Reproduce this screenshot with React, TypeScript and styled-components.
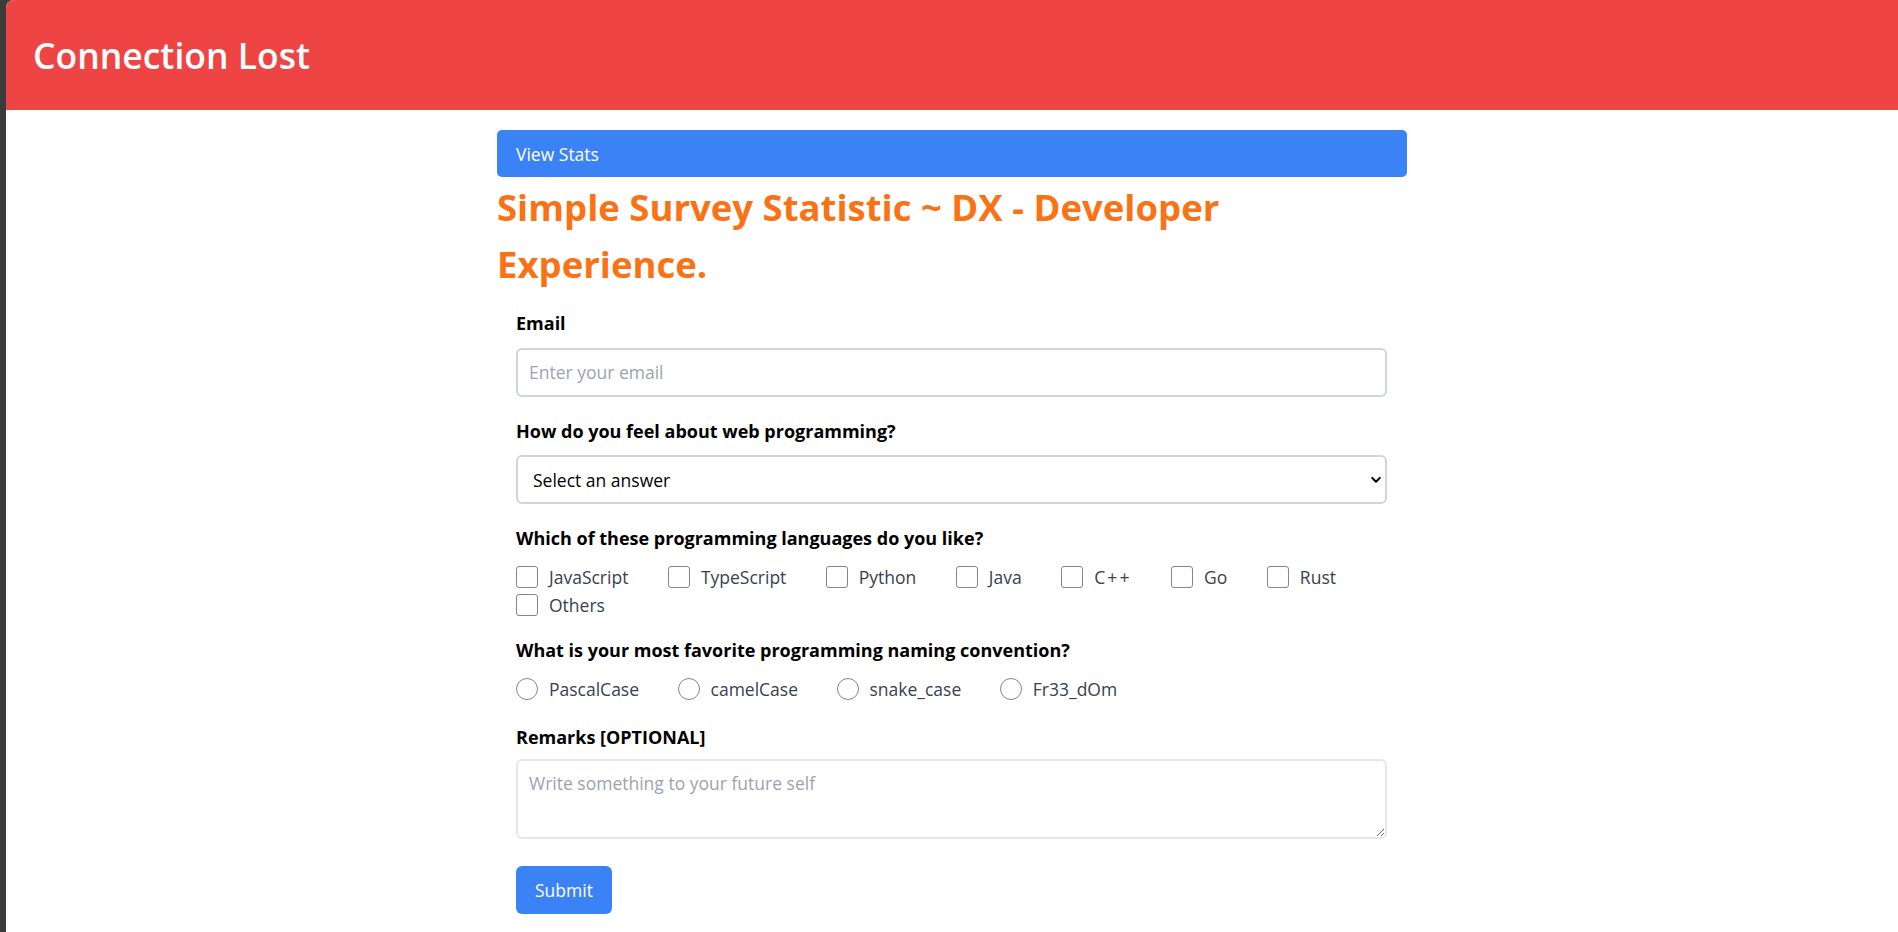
import React from "react";
import styled, { createGlobalStyle } from "styled-components";

const GlobalStyle = createGlobalStyle`
  * { box-sizing: border-box; }
  html, body { margin: 0; padding: 0; }
  body {
    background: #3b3b3b;
    font-family: "Open Sans", "Noto Sans", Arial, sans-serif;
  }
`;

const Shell = styled.div`
  margin-left: 6px;
  min-height: 100vh;
  background: #ffffff;
  border-top-left-radius: 8px;
  overflow: hidden;
`;

const Header = styled.header`
  height: 110px;
  background: #ef4444;
  display: flex;
  align-items: center;
  padding-left: 27px;
`;

const HeaderTitle = styled.h1`
  margin: 0;
  color: #ffffff;
  font-size: 35.5px;
  font-weight: 600;
  line-height: 1;
  padding-top: 2px;
`;

const Main = styled.main`
  max-width: 910px;
  margin: 0 auto;
  padding-top: 20px;
  padding-bottom: 20px;
`;

const StatsButton = styled.button`
  display: block;
  width: 100%;
  height: 47px;
  padding: 0 19px;
  border: none;
  border-radius: 5px;
  background: #3b82f6;
  color: #ffffff;
  font-family: inherit;
  font-size: 17.5px;
  text-align: left;
  cursor: pointer;
`;

const Title = styled.h2`
  margin: 2px 0 0;
  color: #f97316;
  font-size: 36.5px;
  font-weight: 700;
  line-height: 57px;
`;

const Form = styled.form`
  padding: 16px 20px 0 19px;
  display: flex;
  flex-direction: column;
`;

const Field = styled.div<{ $gap?: number }>`
  display: flex;
  flex-direction: column;
  margin-bottom: ${(p) => p.$gap ?? 20}px;
`;

const Label = styled.label<{ $space?: number }>`
  font-size: 18px;
  font-weight: 700;
  line-height: 28px;
  color: #000000;
  margin-bottom: ${(p) => p.$space ?? 10.5}px;
`;

const TextInput = styled.input`
  height: 49px;
  width: 100%;
  padding: 0 11px;
  border: 2px solid #d1d5db;
  border-radius: 6px;
  font-family: inherit;
  font-size: 17.5px;
  color: #111827;
  outline: none;
  &::placeholder { color: #9ca3af; }
`;

const SelectWrap = styled.div`
  position: relative;
  width: 100%;
`;

const Select = styled.select`
  appearance: none;
  width: 100%;
  height: 49px;
  padding: 0 15px;
  border: 2px solid #d1d5db;
  border-radius: 6px;
  background: #ffffff;
  font-family: inherit;
  font-size: 17.5px;
  color: #000000;
  outline: none;
`;

const Chevron = styled.svg`
  position: absolute;
  right: 6px;
  top: 50%;
  width: 10px;
  height: 7px;
  transform: translateY(-50%);
  pointer-events: none;
`;

const OptionGroup = styled.div<{ $gap: number }>`
  display: flex;
  flex-wrap: wrap;
  column-gap: ${(p) => p.$gap}px;
`;

const OptionItem = styled.label`
  display: flex;
  align-items: center;
  height: 28px;
  font-size: 17.5px;
  line-height: 28px;
  color: #374151;
  cursor: pointer;
`;

const OptionText = styled.span<{ $spaced?: boolean }>`
  letter-spacing: ${(p) => (p.$spaced ? "0.12em" : "normal")};
`;

const Control = styled.input<{ $round?: boolean }>`
  appearance: none;
  width: 22px;
  height: 22px;
  margin: 0 11px 0 0;
  border: 1.5px solid #858585;
  border-radius: ${(p) => (p.$round ? "50%" : "3px")};
  background: #ffffff;
  flex-shrink: 0;
`;

const TextArea = styled.textarea`
  display: block;
  width: 100%;
  height: 80px;
  padding: 10px 11px;
  border: 2px solid #e5e7eb;
  border-radius: 6px;
  font-family: inherit;
  font-size: 17.5px;
  color: #111827;
  resize: vertical;
  outline: none;
  &::placeholder { color: #9ca3af; }
`;

const SubmitButton = styled.button`
  align-self: flex-start;
  margin-top: 6.5px;
  height: 48px;
  padding: 0 19px;
  border: none;
  border-radius: 6px;
  background: #3b82f6;
  color: #ffffff;
  font-family: inherit;
  font-size: 17.5px;
  cursor: pointer;
`;

const languages = ["JavaScript", "TypeScript", "Python", "Java", "C++", "Go", "Rust", "Others"];
const conventions = ["PascalCase", "camelCase", "snake_case", "Fr33_dOm"];

export default function App() {
  return (
    <>
      <GlobalStyle />
      <Shell>
        <Header>
          <HeaderTitle>Connection Lost</HeaderTitle>
        </Header>
        <Main>
          <StatsButton type="button">View Stats</StatsButton>
          <Title>Simple Survey Statistic ~ DX - Developer Experience.</Title>
          <Form onSubmit={(e) => e.preventDefault()}>
            <Field>
              <Label htmlFor="email">Email</Label>
              <TextInput id="email" type="email" placeholder="Enter your email" />
            </Field>
            <Field>
              <Label htmlFor="feel">How do you feel about web programming?</Label>
              <SelectWrap>
                <Select id="feel" defaultValue="">
                  <option value="">Select an answer</option>
                  <option value="love">I love it</option>
                  <option value="ok">It's okay</option>
                  <option value="hate">I hate it</option>
                </Select>
                <Chevron viewBox="0 0 10 7" aria-hidden="true">
                  <path d="M1.2 1.4 L5 5.2 L8.8 1.4" fill="none" stroke="#000" strokeWidth="2" strokeLinecap="round" strokeLinejoin="round" />
                </Chevron>
              </SelectWrap>
            </Field>
            <Field $gap={17.5}>
              <Label>Which of these programming languages do you like?</Label>
              <OptionGroup $gap={39.5}>
                {languages.map((l) => (
                  <OptionItem key={l}>
                    <Control type="checkbox" name="languages" value={l} />
                    <OptionText $spaced={l === "C++"}>{l}</OptionText>
                  </OptionItem>
                ))}
              </OptionGroup>
            </Field>
            <Field>
              <Label>What is your most favorite programming naming convention?</Label>
              <OptionGroup $gap={38.5}>
                {conventions.map((c) => (
                  <OptionItem key={c}>
                    <Control $round type="radio" name="convention" value={c} />
                    <OptionText>{c}</OptionText>
                  </OptionItem>
                ))}
              </OptionGroup>
            </Field>
            <Field>
              <Label htmlFor="remarks" $space={8.5}>Remarks [OPTIONAL]</Label>
              <TextArea id="remarks" placeholder="Write something to your future self" />
            </Field>
            <SubmitButton type="submit">Submit</SubmitButton>
          </Form>
        </Main>
      </Shell>
    </>
  );
}
